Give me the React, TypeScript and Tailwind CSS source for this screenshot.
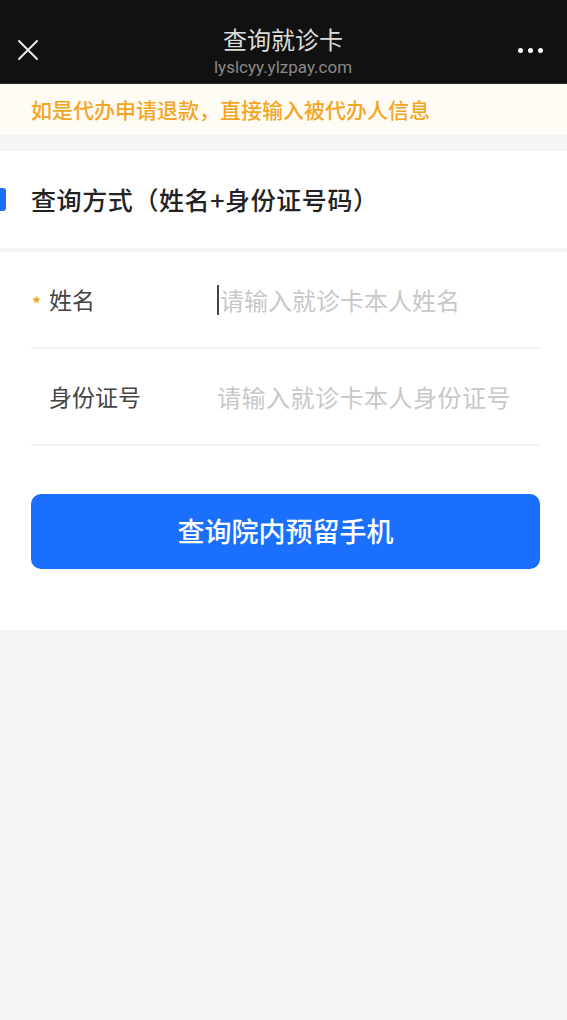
import { FC } from "react";

const font = { fontFamily: '"Noto Sans CJK SC", "Noto Sans", sans-serif' };

const App: FC = () => {
  return (
    <div className="min-h-[1020px] bg-[#f5f5f5]" style={font}>
      {/* top bar */}
      <div className="h-[84px] bg-[#111111] flex items-start justify-between px-[18px] border-b border-[#2a2a2a]">
        <svg width="20" height="20" viewBox="0 0 20 20" className="mt-[40px]">
          <path d="M1 1L19 19M19 1L1 19" stroke="#e8e8e8" strokeWidth="2" strokeLinecap="round" />
        </svg>
        <div className="flex flex-col items-center pt-[24px] ml-[10px]">
          <div className="text-[24px] leading-[30px] text-[#dcdcdc]">查询就诊卡</div>
          <div className="text-[17px] leading-[24px] mt-[1px] text-[#8a8a8a]" style={{ fontFamily: '"Roboto", sans-serif' }}>
            lyslcyy.ylzpay.com
          </div>
        </div>
        <div className="flex gap-[5px] mt-[48px] mr-[6px]">
          <span className="w-[5px] h-[5px] rounded-full bg-white" />
          <span className="w-[5px] h-[5px] rounded-full bg-white" />
          <span className="w-[5px] h-[5px] rounded-full bg-white" />
        </div>
      </div>

      {/* notice */}
      <div className="h-[51px] bg-[#fffcf6] flex items-center px-[31px]">
        <span className="text-[21px] font-medium text-[#f5a524]">如是代办申请退款，直接输入被代办人信息</span>
      </div>

      <div className="h-[16px]" />

      {/* section header */}
      <div className="bg-white h-[97px] flex items-center relative">
        <span className="absolute left-0 top-[37px] w-[6px] h-[23px] bg-[#1d6ff6] rounded-r-[3px]" />
        <span className="pl-[31px] text-[25px] font-medium tracking-[0.6px] text-[#222222]">查询方式（姓名+身份证号码）</span>
      </div>

      <div className="h-[4px]" />

      {/* form */}
      <div className="bg-white pb-[61px]">
        <div className="pl-[31px] pr-[27px]">
          <div className="h-[97px] flex items-center border-b-2 border-[#f3f3f3]">
            <div className="w-[186px] flex items-center">
              <svg width="9" height="9" viewBox="0 0 10 10" className="ml-[1px] mr-[8px]">
                <path d="M5 0.5L6.3 3.6L9.6 3.8L7.1 6L7.9 9.3L5 7.5L2.1 9.3L2.9 6L0.4 3.8L3.7 3.6Z" fill="#f5a524" />
              </svg>
              <span className="text-[23px] text-[#444444]">姓名</span>
            </div>
            <div className="flex items-center">
              <span className="w-[2px] h-[30px] bg-[#444444] mr-[1px]" />
              <span className="text-[24px] text-[#c8c8c8]">请输入就诊卡本人姓名</span>
            </div>
          </div>
          <div className="h-[97px] flex items-center border-b-2 border-[#f3f3f3]">
            <div className="w-[186px] pl-[18px]">
              <span className="text-[23px] text-[#444444]">身份证号</span>
            </div>
            <span className="text-[24px] text-[#c8c8c8] tracking-[0.5px]">请输入就诊卡本人身份证号</span>
          </div>
          <button className="mt-[48px] w-full h-[75px] rounded-[10px] bg-[#1b6ffd] text-white text-[27px] font-medium flex items-center justify-center">
            查询院内预留手机
          </button>
        </div>
      </div>
    </div>
  );
};

export default App;
